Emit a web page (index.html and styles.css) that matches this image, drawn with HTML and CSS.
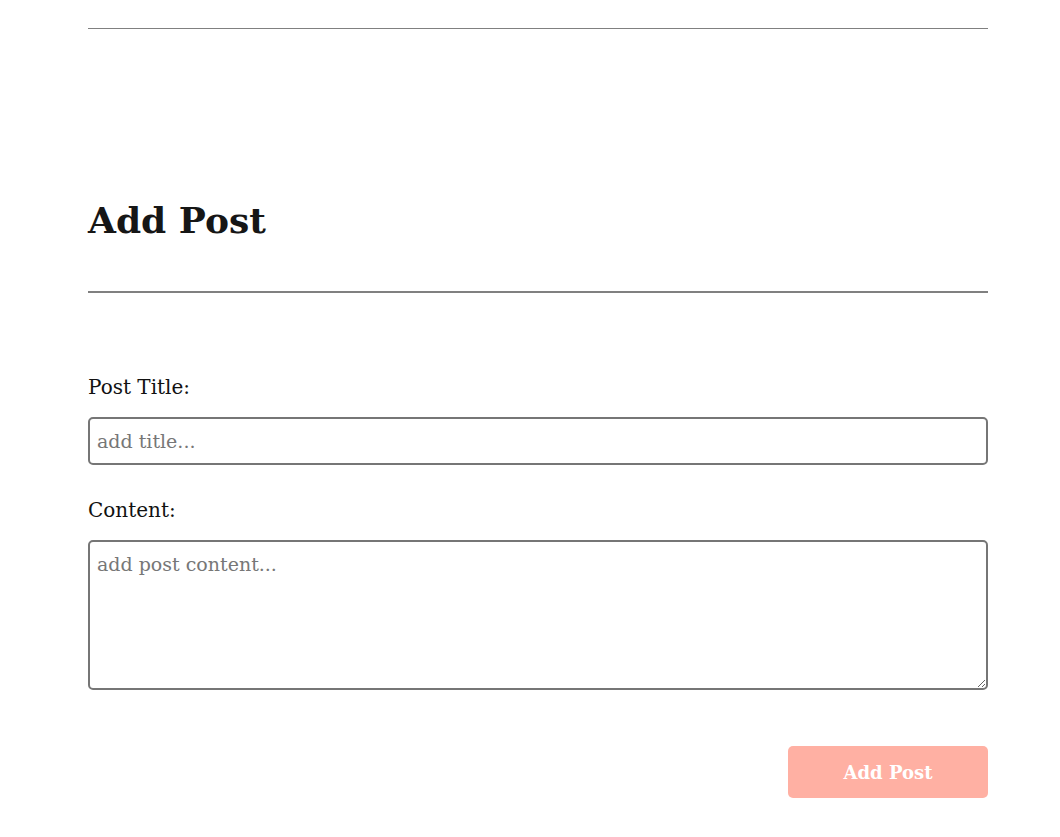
FILE: index.html
```html
<!DOCTYPE html>
<html lang="en">
<head>
<meta charset="utf-8">
<title>Add Post</title>
<link rel="stylesheet" href="styles.css">
</head>
<body>
<main class="page">
  <hr class="rule rule-top">
  <section class="add-post">
    <h1 class="title">Add Post</h1>
    <hr class="rule rule-title">
    <form class="post-form">
      <label class="field-label" for="postTitle">Post Title:</label>
      <input class="field-input" id="postTitle" type="text" placeholder="add title...">
      <label class="field-label" for="postContent">Content:</label>
      <textarea class="field-textarea" id="postContent" placeholder="add post content..."></textarea>
      <div class="actions">
        <button class="submit-btn" type="button" disabled>Add Post</button>
      </div>
    </form>
  </section>
</main>
</body>
</html>
```
FILE: styles.css
```css
* { box-sizing: border-box; }
html, body { margin: 0; padding: 0; background: #fff; }
body {
  font-family: "Roboto Slab", "DejaVu Serif", "Liberation Serif", serif;
  color: #111;
}
.page {
  width: 900px;
  margin: 0 0 0 88px;
  padding-top: 28px;
}
.rule {
  border: 0;
  margin: 0;
  background: #808080;
}
.rule-top { height: 1px; }
.rule-title { height: 2px; }
.add-post { padding-top: 167px; }
.title {
  font-size: 36px;
  font-weight: 700;
  line-height: 48px;
  margin: 0 0 47px 0;
  color: #161616;
}
.post-form {
  display: flex;
  flex-direction: column;
  padding-top: 81px;
}
.field-label {
  font-size: 20px;
  line-height: 26px;
  color: #111;
  margin-bottom: 17px;
}
.field-input, .field-textarea {
  width: 100%;
  border: 2px solid #767676;
  border-radius: 5px;
  font-family: inherit;
  font-size: 19px;
  color: #222;
  padding: 6px 7px;
  margin: 0;
  background: #fff;
}
.field-input::placeholder, .field-textarea::placeholder { color: #777; }
.field-input { height: 48px; margin-bottom: 32px; }
.field-textarea {
  height: 150px;
  resize: vertical;
  display: block;
  padding-top: 10px;
  line-height: 1.3;
}
.actions {
  display: flex;
  justify-content: flex-end;
  padding-top: 56px;
}
.submit-btn {
  width: 200px;
  height: 52px;
  border: 0;
  border-radius: 5px;
  background: #ffb0a3;
  color: #fff;
  font-family: inherit;
  font-weight: 700;
  font-size: 18px;
}
```
